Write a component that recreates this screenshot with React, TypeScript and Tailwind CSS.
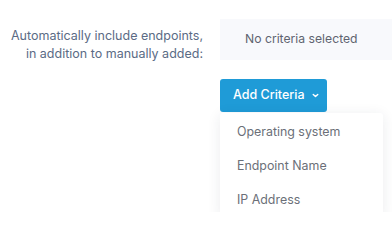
import React from "react";

export default function App() {
  const items = ["Operating system", "Endpoint Name", "IP Address"];
  return (
    <div
      className="w-[392px] h-[212px] overflow-hidden bg-white flex items-start"
      style={{ fontFamily: "Inter, 'Noto Sans', sans-serif" }}
    >
      <div className="w-[204px] shrink-0 pt-[27px] pr-[1px] text-right text-[12.5px] leading-[18px] text-[#5b6b85]">
        <div>Automatically include endpoints,</div>
        <div>in addition to manually added:</div>
      </div>
      <div className="ml-[16px] flex flex-col pt-[19px] flex-1 min-w-0">
        <div className="shrink-0 h-[41px] w-[200px] bg-[#f8f9fc] flex items-center pl-[25px] text-[12.2px] text-[#5f6470]">
          No criteria selected
        </div>
        <div className="shrink-0 mt-[19px] relative">
          <button className="h-[33px] w-[107px] rounded-[3px] bg-[#1f9bd7] text-white text-[12.5px] font-medium flex items-center pl-[13px] gap-[6px]">
            <span>Add Criteria</span>
            <svg width="9" height="9" viewBox="0 0 10 10" fill="none">
              <path d="M2.5 3.8 L5 6.2 L7.5 3.8" stroke="white" strokeWidth="1.6" strokeLinecap="round" strokeLinejoin="round" />
            </svg>
          </button>
          <div className="mt-[1px] w-[163px] bg-white rounded-[3px] shadow-[0_2px_14px_rgba(30,40,70,0.09)] pt-[2px]">
            {items.map((t) => (
              <div key={t} className="h-[34px] flex items-center pl-[17px] text-[12.4px] text-[#6b6f78]">
                {t}
              </div>
            ))}
          </div>
        </div>
      </div>
    </div>
  );
}
